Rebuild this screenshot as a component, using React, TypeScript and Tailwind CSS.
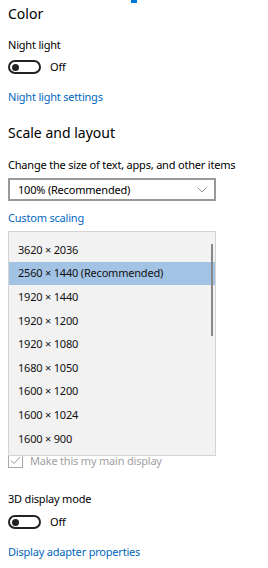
import React from "react";

const font = { fontFamily: '"Noto Sans", "Open Sans", sans-serif' };
const body = "text-[11px] leading-[16px] tracking-[-0.2px]";

function Toggle() {
  return (
    <div className="flex items-center h-[14px]">
      <div className="w-[33px] h-[14px] rounded-full border-2 border-[#222] flex items-center pl-[2px]">
        <div className="w-[7px] h-[7px] rounded-full bg-[#222]" />
      </div>
      <span className={`ml-[9px] ${body} text-black`}>Off</span>
    </div>
  );
}

const items = [
  "3620 × 2036",
  "2560 × 1440 (Recommended)",
  "1920 × 1440",
  "1920 × 1200",
  "1920 × 1080",
  "1680 × 1050",
  "1600 × 1200",
  "1600 × 1024",
  "1600 × 900",
];

export default function App() {
  return (
    <div className="relative w-[268px] h-[568px] bg-white overflow-hidden" style={font}>
      <div className="absolute left-[131px] top-0 w-[6px] h-[3px] bg-[#0078d7]" />
      <div className="flex flex-col pl-[8px]">
        <div className="mt-[4px] text-[14px] leading-[20px] text-black">Color</div>
        <div className={`mt-[13px] ${body} text-black`}>Night light</div>
        <div className="mt-[7px]"><Toggle /></div>
        <div className={`mt-[15px] ${body} text-[#0067c0]`}>Night light settings</div>
        <div className="mt-[18px] text-[14px] leading-[20px] text-black">Scale and layout</div>
        <div className={`mt-[14px] ${body} text-black whitespace-nowrap`}>Change the size of text, apps, and other items</div>
        <div className="mt-[5px] w-[208px] h-[23px] border-2 border-[#999] flex items-center justify-between pl-[8px] pr-[7px]">
          <span className={`${body} text-black`}>100% (Recommended)</span>
          <svg width="10" height="6" viewBox="0 0 10 6" fill="none">
            <path d="M0.5 0.5 L5 5 L9.5 0.5" stroke="#777" strokeWidth="0.8" />
          </svg>
        </div>
        <div className={`mt-[9px] ${body} text-[#0067c0]`}>Custom scaling</div>
        <div className="relative z-10 mt-[5px] w-[208px] h-[225px] bg-[#f2f2f2] border border-[#d4d4d4] pt-[6px]">
          {items.map((t, i) => (
            <div
              key={t}
              className={`h-[23.6px] flex items-center pl-[9px] ${body} text-[#111] ${i === 1 ? "bg-[#a3c3e5]" : ""}`}
            >
              {t}
            </div>
          ))}
          <div className="absolute right-[2px] top-[12px] w-[2px] h-[92px] bg-[#888]" />
        </div>
        <div className="-mt-[3px] flex items-center h-[15px]">
          <div className="w-[15px] h-[15px] border border-[#aaa] flex items-center justify-center">
            <svg width="11" height="9" viewBox="0 0 11 9" fill="none">
              <path d="M1 4.5 L4 7.5 L10 1" stroke="#999" strokeWidth="1" />
            </svg>
          </div>
          <span className={`ml-[7px] ${body} text-[#a0a0a0]`}>Make this my main display</span>
        </div>
        <div className={`mt-[23px] ${body} text-black`}>3D display mode</div>
        <div className="mt-[8px]"><Toggle /></div>
        <div className={`mt-[15px] ${body} text-[#0067c0]`}>Display adapter properties</div>
      </div>
    </div>
  );
}
